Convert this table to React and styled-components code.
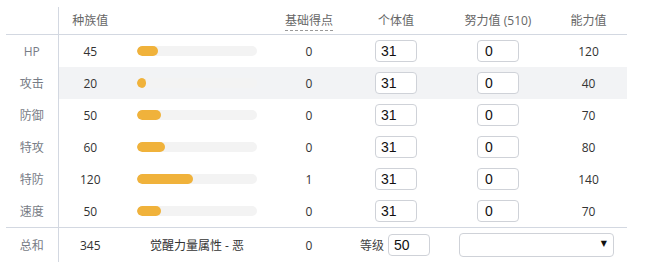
import styled, { createGlobalStyle } from "styled-components";

const LINE = "#d3d8e1";
const BAR_FILL = "#f0b23b";
const MAX_BASE = 255;

const STATS = [
    { label: "HP", base: 45, point: 0, iv: 31, ev: 0, value: 120 },
    { label: "攻击", base: 20, point: 0, iv: 31, ev: 0, value: 40, active: true },
    { label: "防御", base: 50, point: 0, iv: 31, ev: 0, value: 70 },
    { label: "特攻", base: 60, point: 0, iv: 31, ev: 0, value: 80 },
    { label: "特防", base: 120, point: 1, iv: 31, ev: 0, value: 140 },
    { label: "速度", base: 50, point: 0, iv: 31, ev: 0, value: 70 },
];

const GlobalStyle = createGlobalStyle`
    body {
        margin: 0;
        background: #fff;
        font-family: "Open Sans", "Noto Sans CJK SC", sans-serif;
    }
`;

const Page = styled.div`
    padding: 7px 22px 0 6px;
`;

const Table = styled.table`
    border-collapse: collapse;
    table-layout: fixed;
    width: 621px;
    font-size: 12px;
    color: #333;
`;

const HeadCell = styled.th`
    height: 27px;
    padding: 0;
    font-weight: normal;
    color: #666;
    text-align: center;
    border-bottom: 1px solid ${LINE};
    border-right: ${({ $divider }) => ($divider ? `1px solid ${LINE}` : "none")};
    line-height: 18px;
`;

const Dashed = styled.span`
    border-bottom: 1px dashed #999;
    padding-bottom: 1px;
`;

const Cell = styled.td`
    height: ${({ $tall }) => ($tall ? 34 : 32)}px;
    padding: 0;
    text-align: ${({ $align }) => $align || "center"};
    background: ${({ $active }) => ($active ? "#f2f3f5" : "transparent")};
    border-top: ${({ $topLine }) => ($topLine ? `1px solid ${LINE}` : "none")};
`;

const LabelCell = styled(Cell)`
    color: #777c86;
    border-right: 1px solid ${LINE};
    background: transparent;
`;

const Track = styled.div`
    width: 120px;
    height: 10px;
    margin-left: 15px;
    border-radius: 5px;
    background: #f3f3f3;
    overflow: hidden;
`;

const Fill = styled.div`
    height: 100%;
    border-radius: 5px;
    background: ${BAR_FILL};
`;

const NumInput = styled.input`
    box-sizing: border-box;
    width: 42px;
    height: 22px;
    padding: 0 0 0 ${({ $pad }) => $pad || 5}px;
    border: 1px solid #cfd2d8;
    border-radius: 4px;
    font-family: "Liberation Sans", Arial, sans-serif;
    font-size: 14px;
    color: #111;
    background: #fff;
    outline: none;
`;

const LevelBox = styled.div`
    display: flex;
    align-items: center;
    gap: 4px;
    color: #444;
    margin-left: 14px;
`;

const SelectWrap = styled.div`
    position: relative;
    width: 155px;
    height: 24px;
    margin-left: 13px;
`;

const Select = styled.select`
    appearance: none;
    box-sizing: border-box;
    width: 100%;
    height: 100%;
    border: 1px solid #cfd2d8;
    border-radius: 4px;
    background: #fff;
    outline: none;
`;

const Arrow = styled.span`
    position: absolute;
    right: 7px;
    top: 6px;
    font-family: "DejaVu Sans", sans-serif;
    font-size: 8px;
    color: #111;
    pointer-events: none;
`;

function StatRow({ stat }) {
    const width = Math.round((stat.base / MAX_BASE) * 120);
    return (
        <tr>
            <LabelCell>{stat.label}</LabelCell>
            <Cell $active={stat.active}>{stat.base}</Cell>
            <Cell $active={stat.active} $align="left">
                <Track>
                    <Fill style={{ width: `${Math.max(width, 9)}px` }} />
                </Track>
            </Cell>
            <Cell $active={stat.active}>{stat.point}</Cell>
            <Cell $active={stat.active}>
                <NumInput defaultValue={stat.iv} />
            </Cell>
            <Cell $active={stat.active}>
                <NumInput $pad={7} defaultValue={stat.ev} />
            </Cell>
            <Cell $active={stat.active}>{stat.value}</Cell>
        </tr>
    );
}

export default function App() {
    return (
        <Page>
            <GlobalStyle />
            <Table>
                <colgroup>
                    <col style={{ width: 52 }} />
                    <col style={{ width: 64 }} />
                    <col style={{ width: 150 }} />
                    <col style={{ width: 74 }} />
                    <col style={{ width: 100 }} />
                    <col style={{ width: 104 }} />
                    <col style={{ width: 77 }} />
                </colgroup>
                <thead>
                    <tr>
                        <HeadCell $divider />
                        <HeadCell>种族值</HeadCell>
                        <HeadCell />
                        <HeadCell>
                            <Dashed>基础得点</Dashed>
                        </HeadCell>
                        <HeadCell>个体值</HeadCell>
                        <HeadCell>努力值 (510)</HeadCell>
                        <HeadCell>能力值</HeadCell>
                    </tr>
                </thead>
                <tbody>
                    {STATS.map((stat) => (
                        <StatRow key={stat.label} stat={stat} />
                    ))}
                    <tr>
                        <LabelCell $tall $topLine>总和</LabelCell>
                        <Cell $tall $topLine>345</Cell>
                        <Cell $tall $topLine>觉醒力量属性 - 恶</Cell>
                        <Cell $tall $topLine>0</Cell>
                        <Cell $tall $topLine $align="left">
                            <LevelBox>
                                <span>等级</span>
                                <NumInput defaultValue={50} />
                            </LevelBox>
                        </Cell>
                        <Cell $tall $topLine $align="left" colSpan={2}>
                            <SelectWrap>
                                <Select defaultValue="">
                                    <option value=""></option>
                                </Select>
                                <Arrow>▼</Arrow>
                            </SelectWrap>
                        </Cell>
                    </tr>
                </tbody>
            </Table>
        </Page>
    );
}
